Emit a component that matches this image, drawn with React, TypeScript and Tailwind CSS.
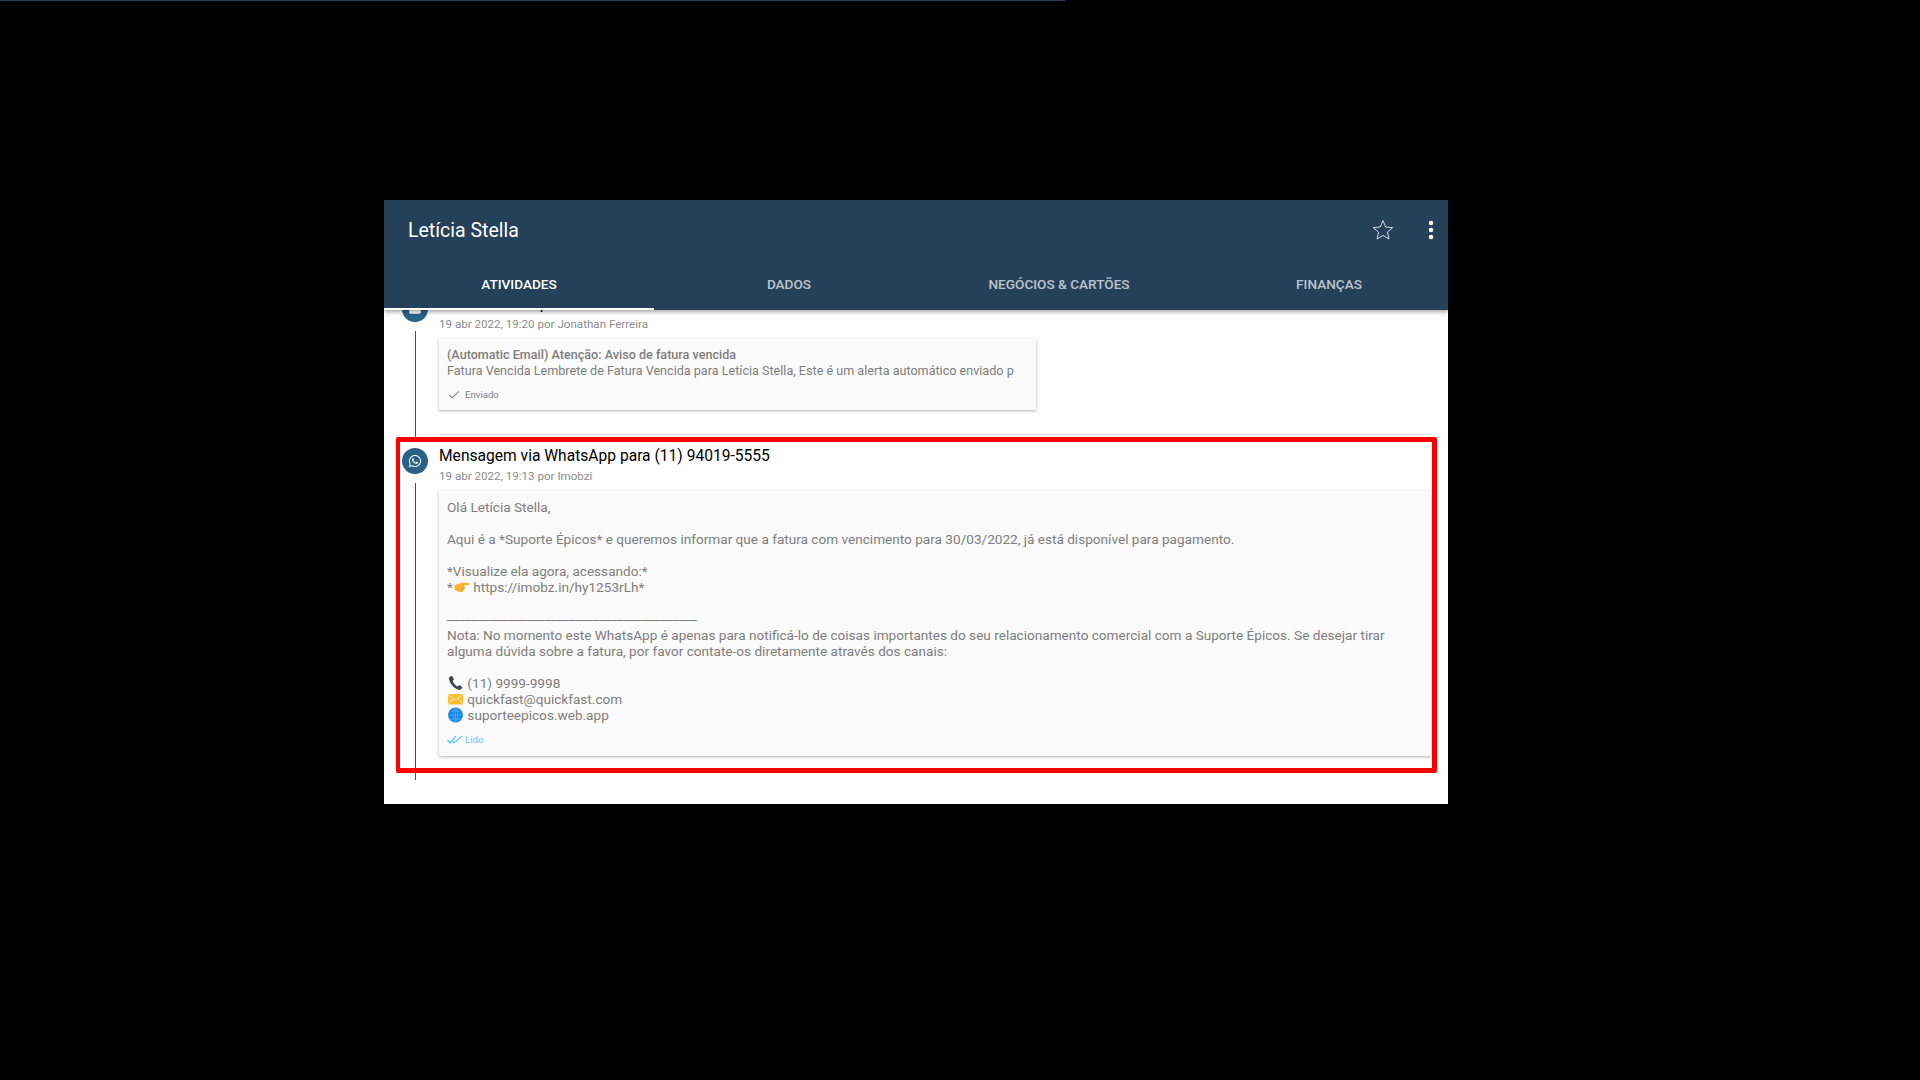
import { Check, MoreVertical } from 'lucide-react';
import type { ReactNode } from 'react';
import { FaWhatsapp } from 'react-icons/fa';

const tabs = ['Atividades', 'Dados', 'Negócios & Cartões', 'Finanças'];

function Emoji({ children }: { children: ReactNode }) {
  return (
    <svg viewBox="0 0 16 16" className="inline-block h-4 w-[17px] align-[-3px]">
      {children}
    </svg>
  );
}

function PointingIcon() {
  return (
    <Emoji>
      <path d="M1 6 6 4.500 8 3.500l7 .6c1.200.2 1.200 1.900 0 2l-4.500.2.600 1.200c.4 1.400.2 2.200-.4 2.800l-.5 1.200c-.5 1-1 1.200-2 1.200H5c-1.500 0-2-.6-2.500-1.400L1 10.500z" fill="#fbb52d" />
      <path d="M7.500 7h3M7 9.500h3.300M6.500 11.700h3" stroke="#e09a26" strokeWidth="0.600" fill="none" />
    </Emoji>
  );
}

function PhoneIcon() {
  return (
    <Emoji>
      <path d="M3.500 1 1.500 2.500C.8 7 7 14.800 12.500 15l2.500-2-.3-1-3-2-1.800 1.500C8 10.800 5.500 7.500 5.300 5.500L6.500 4.500 4.800 1.200z" fill="#3f4a50" />
    </Emoji>
  );
}

function EnvelopeIcon() {
  return (
    <Emoji>
      <rect x="0.500" y="3" width="15" height="10.500" rx="0.500" fill="#fbc02d" />
      <path d="M.5 3.500 8 9l7.500-5.500M.5 13l5.500-5.500M15.500 13 10 7.500" stroke="#f4f0d0" strokeWidth="0.800" fill="none" />
    </Emoji>
  );
}

function GlobeIcon() {
  return (
    <Emoji>
      <circle cx="8" cy="8" r="7.500" fill="#1e88e5" />
      <path d="M1 8h14M8 .5v15M2.500 4h11M2.500 12h11M8 .5C5 4 5 12 8 15.500M8 .5c3 3.500 3 11.500 0 15" stroke="#64b5f6" strokeWidth="0.500" fill="none" />
    </Emoji>
  );
}

function TimelineRow({
  icon,
  title,
  meta,
  divider,
  className,
  children,
}: {
  icon: ReactNode;
  title: string;
  meta: string;
  divider?: boolean;
  className?: string;
  children: ReactNode;
}) {
  return (
    <div className={`flex ${className ?? ''}`}>
      <div className="flex w-[55px] shrink-0 flex-col pl-[18px]">
        <div className="ml-[13px] h-[7px] w-px bg-[#2c5a7c]" />
        <div className="mt-[6px] flex h-[26px] w-[26px] items-center justify-center rounded-full bg-[#2a6186] text-white">
          {icon}
        </div>
        <div className="ml-[13px] mt-[9px] w-px flex-1 bg-[#2c5a7c]" />
      </div>
      <div className="min-w-0 flex-1 pr-[17px]">
        <div className={`pt-[12px] ${divider ? 'border-b border-[#dddddd] pb-[24px]' : ''}`}>
          <div className="h-[18px] text-[15.6px] leading-[18px] text-black">{title}</div>
          <div className="mt-[3px] text-[11.6px] leading-[16px] text-[#8c8c8c]">{meta}</div>
          {children}
        </div>
      </div>
    </div>
  );
}

export default function App() {
  return (
    <div className="flex h-screen flex-col overflow-hidden bg-black font-[Roboto,sans-serif]">
      <div className="h-px w-[1065px] bg-[#25415a]" />

      <div className="relative ml-[384px] mt-[199px] flex h-[604px] w-[1064px] flex-col overflow-hidden bg-white">
        <header className="relative z-10 h-[110px] shrink-0 bg-[#25415a] shadow-[0_2px_4px_rgba(0,0,0,0.35)]">
          <div className="flex h-[60px] items-center pl-6 pr-[5px] text-white">
            <h1 className="flex-1 pt-[1px] text-[19.5px] font-normal">Letícia Stella</h1>
            <svg viewBox="0 0 24 24" className="mr-[24px] h-6 w-6" fill="none" stroke="currentColor" strokeWidth="0.8">
              <path d="M12 2.500l2.700 6.500 7 .6-5.300 4.600 1.600 6.800-6-3.600-6 3.600 1.600-6.800L2.300 9.600l7-.6z" />
            </svg>
            <MoreVertical className="h-6 w-6" strokeWidth={2.500} />
          </div>
          <nav className="flex h-[50px]">
            {tabs.map((tab, index) => (
              <div
                key={tab}
                className={`flex w-[270px] shrink-0 items-center justify-center border-b-2 pt-[1px] text-[13.6px] font-medium uppercase ${
                  index === 0 ? 'border-white text-white' : 'border-transparent text-white/70'
                }`}
              >
                {tab}
              </div>
            ))}
          </nav>
        </header>

        <div className="flex-1 overflow-hidden">
          <TimelineRow
            className="mt-[-27px]"
            divider
            icon={
              <svg viewBox="0 0 24 24" className="h-[14px] w-[14px]" fill="currentColor">
                <path d="M20 4H4c-1.100 0-2 .9-2 2v12c0 1.100.9 2 2 2h16c1.100 0 2-.9 2-2V6c0-1.100-.9-2-2-2z" />
              </svg>
            }
            title="Email enviado para Letícia Stella"
            meta="19 abr 2022, 19:20 por Jonathan Ferreira"
          >
            <div className="mt-[7px] h-[71px] w-[597px] bg-[#fafafa] px-2 pt-[8px] text-[12.6px] leading-[16px] text-[#7e7e7e] shadow-[0_1px_3px_rgba(0,0,0,0.3)]">
              <div className="font-medium">(Automatic Email) Atenção: Aviso de fatura vencida</div>
              <div className="overflow-hidden whitespace-nowrap">
                Fatura Vencida Lembrete de Fatura Vencida para Letícia Stella, Este é um alerta automático enviado p
              </div>
              <div className="mt-[8px] flex items-center gap-[4px] text-[9.6px]">
                <Check className="h-[14px] w-[14px]" strokeWidth={1.800} />
                Enviado
              </div>
            </div>
          </TimelineRow>

          <TimelineRow
            icon={<FaWhatsapp className="h-[14px] w-[14px]" />}
            title="Mensagem via WhatsApp para (11) 94019-5555"
            meta="19 abr 2022, 19:13 por Imobzi"
          >
            <div className="mb-[24px] mt-[7px] h-[265px] bg-[#fafafa] px-2 pt-[8px] text-[13.6px] leading-[16px] text-[#7e7e7e] shadow-[0_1px_3px_rgba(0,0,0,0.3)]">
              <p>Olá Letícia Stella,</p>
              <p className="mt-4">
                Aqui é a *Suporte Épicos* e queremos informar que a fatura com vencimento para 30/03/2022, já está disponível para pagamento.
              </p>
              <p className="mt-4">*Visualize ela agora, acessando:*</p>
              <p>
                *<PointingIcon /> https://imobz.in/hy1253rLh*
              </p>
              <p className="mt-4 h-4 text-[13.5px] leading-[8px]">_________________________________________</p>
              <p className="w-[960px]">
                Nota: No momento este WhatsApp é apenas para notificá-lo de coisas importantes do seu relacionamento comercial com a Suporte Épicos. Se desejar tirar alguma dúvida sobre a fatura, por favor contate-os diretamente através dos canais:
              </p>
              <p className="mt-4">
                <PhoneIcon /> (11) 9999-9998
              </p>
              <p>
                <EnvelopeIcon /> quickfast@quickfast.com
              </p>
              <p>
                <GlobeIcon /> suporteepicos.web.app
              </p>
              <div className="mt-[9px] flex items-center gap-[2px] text-[9.6px] text-[#5ec8f5]">
                <svg viewBox="0 0 16 10" className="h-[10px] w-4" fill="none" stroke="currentColor" strokeWidth="1.200">
                  <path d="M0.500 5 3 8l6-7M4.500 5.500 7 8l8-7" />
                </svg>
                Lido
              </div>
            </div>
          </TimelineRow>
        </div>

        <div className="absolute left-3 top-[237px] z-20 h-[336px] w-[1041px] rounded-[2px] border-[5px] border-l-4 border-[#ff0000]" />
      </div>
    </div>
  );
}
